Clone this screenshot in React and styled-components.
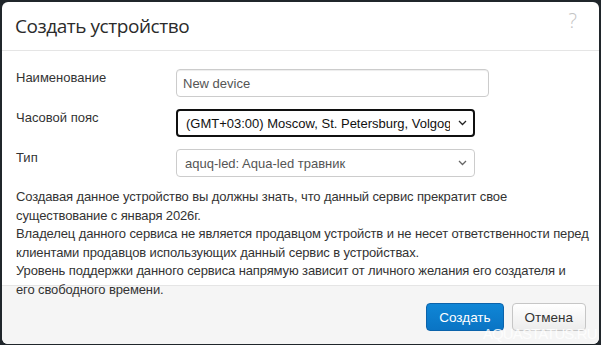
import React from "react";
import styled, { createGlobalStyle } from "styled-components";

const GlobalStyle = createGlobalStyle`
  html, body { margin: 0; padding: 0; }
  body {
    background: #20262b;
    font-family: "Liberation Sans", Arial, sans-serif;
    font-size: 13px;
    color: #333;
  }
  * { box-sizing: border-box; }
`;

const Page = styled.div`
  position: relative;
  width: 601px;
  height: 345px;
  padding: 2px 2px 0 2px;
  overflow: hidden;
`;

const Dialog = styled.div`
  background: #fff;
  border-radius: 6px;
  height: 342px;
  display: flex;
  flex-direction: column;
  overflow: hidden;
`;

const Header = styled.div`
  flex: none;
  display: flex;
  align-items: center;
  justify-content: space-between;
  padding: 11px 22px 11px 13px;
  border-bottom: 1px solid #e5e5e5;
`;

const Title = styled.h4`
  margin: 0;
  font-family: "Open Sans", "Noto Sans", sans-serif;
  font-size: 19px;
  font-weight: 400;
  line-height: 26px;
  color: #2b2b2b;
  letter-spacing: -0.45px;
`;

const Help = styled.span`
  align-self: flex-start;
  font-family: "Open Sans", sans-serif;
  font-size: 20px;
  font-weight: 300;
  line-height: 16px;
  color: #c4c4c4;
`;

const Body = styled.div`
  position: relative;
  z-index: 1;
  flex: none;
  height: 234px;
  min-height: 0;
  padding: 18px 15px 0 14px;
`;

const Form = styled.div`
  display: grid;
  grid-template-columns: 160px auto;
  row-gap: 12px;
  justify-content: start;
`;

const Label = styled.label`
  line-height: 18.57px;
  color: #333;
`;

const Input = styled.div`
  width: 313px;
  height: 28px;
  border: 1px solid #ccc;
  border-radius: 4px;
  padding: 0 6px;
  display: flex;
  align-items: center;
  color: #555;
  box-shadow: inset 0 1px 1px rgba(0, 0, 0, 0.075);
`;

const Select = styled.div`
  width: 299px;
  height: 28px;
  border: ${(p) => (p.$focused ? "2px solid #101010" : "1px solid #ccc")};
  border-radius: 4px;
  padding: ${(p) => (p.$focused ? "0 6px 0 8px" : "0 7px 0 8px")};
  display: flex;
  align-items: center;
  justify-content: space-between;
  color: ${(p) => (p.$focused ? "#111" : "#555")};
  white-space: nowrap;
  overflow: hidden;
`;

const SelectText = styled.span`
  overflow: hidden;
  flex: 1;
  margin-right: 8px;
`;

const Chevron = ({ color }) => (
  <svg width="9" height="6" viewBox="0 0 9 6" style={{ flex: "none" }}>
    <path d="M1 1l3.5 3.5L8 1" fill="none" stroke={color} strokeWidth="1.3" />
  </svg>
);

const Notice = styled.p`
  margin: 11px 0 0 0;
  line-height: 18.57px;
  white-space: nowrap;
  letter-spacing: -0.12px;
  color: #333;
`;

const Footer = styled.div`
  flex: 1;
  background: #f5f5f5;
  border-top: 1px solid #e5e5e5;
  padding: 17px 13px 0 0;
  display: flex;
  justify-content: flex-end;
  align-items: flex-start;
  gap: 8px;
`;

const Button = styled.button`
  height: 28px;
  padding: 0 12px;
  border-radius: 4px;
  font-family: "Liberation Sans", Arial, sans-serif;
  font-size: 13.5px;
  cursor: pointer;
  border: 1px solid ${(p) => (p.$primary ? "#0b63ab" : "#c6c6c6")};
  color: ${(p) => (p.$primary ? "#fff" : "#333")};
  background: ${(p) =>
    p.$primary
      ? "linear-gradient(#0f86d6, #0a74c4)"
      : "linear-gradient(#ffffff, #ececec)"};
`;

const Watermark = styled.div`
  position: absolute;
  left: 483px;
  top: 325px;
  font-family: "Liberation Sans", Arial, sans-serif;
  font-size: 15px;
  letter-spacing: -0.9px;
  color: rgba(255, 255, 255, 0.85);
  pointer-events: none;
  z-index: 5;
`;

export default function App() {
  return (
    <>
      <GlobalStyle />
      <Page>
        <Dialog>
          <Header>
            <Title>Создать устройство</Title>
            <Help>?</Help>
          </Header>
          <Body>
            <Form>
              <Label>Наименование</Label>
              <Input>New device</Input>
              <Label>Часовой пояс</Label>
              <Select $focused>
                <SelectText>(GMT+03:00) Moscow, St. Petersburg, Volgograd</SelectText>
                <Chevron color="#222" />
              </Select>
              <Label>Тип</Label>
              <Select>
                <SelectText>aquq-led: Aqua-led травник</SelectText>
                <Chevron color="#666" />
              </Select>
            </Form>
            <Notice>
              Создавая данное устройство вы должны знать, что данный сервис прекратит свое
              <br />
              существование с января 2026г.
              <br />
              Владелец данного сервиса не является продавцом устройств и не несет ответственности перед
              <br />
              клиентами продавцов использующих данный сервис в устройствах.
              <br />
              Уровень поддержки данного сервиса напрямую зависит от личного желания его создателя и
              <br />
              его свободного времени.
            </Notice>
          </Body>
          <Footer>
            <Button $primary>Создать</Button>
            <Button>Отмена</Button>
          </Footer>
        </Dialog>
        <Watermark>AQUASTATUS.RU</Watermark>
      </Page>
    </>
  );
}
